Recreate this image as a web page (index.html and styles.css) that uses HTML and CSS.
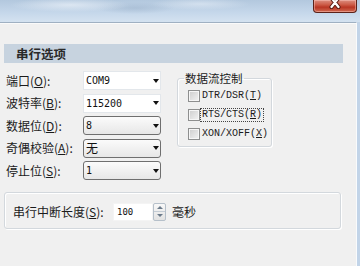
FILE: index.html
```html
<!DOCTYPE html>
<html lang="zh-CN">

<head>
  <meta charset="UTF-8">
  <meta name="viewport" content="width=device-width, initial-scale=1.0">
  <title>串行选项</title>
  <link rel="stylesheet" href="styles.css">
</head>

<body>

  <div class="window">
    <div class="titlebar">
      <div class="close">
        <svg width="14" height="9" viewBox="0 0 14 9">
          <path d="M3.5 -2 L10.5 7 M10.5 -2 L3.5 7" stroke="#5a1c12" stroke-width="4.2" stroke-linecap="round"/>
          <path d="M3.5 -2 L10.5 7 M10.5 -2 L3.5 7" stroke="#fff" stroke-width="2.2" stroke-linecap="round"/>
        </svg>
      </div>
    </div>

    <div class="client">
      <div class="panel">
        <div class="section-head">串行选项</div>

        <div class="settings">
          <div class="fields">
            <div class="row">
              <span class="lbl">端口(<u>O</u>):</span>
              <div class="combo edit"><span>COM9</span><i class="arrow"></i></div>
            </div>
            <div class="row">
              <span class="lbl">波特率(<u>B</u>):</span>
              <div class="combo edit"><span>115200</span><i class="arrow"></i></div>
            </div>
            <div class="row">
              <span class="lbl">数据位(<u>D</u>):</span>
              <div class="combo list"><span>8</span><i class="arrow"></i></div>
            </div>
            <div class="row">
              <span class="lbl">奇偶校验(<u>A</u>):</span>
              <div class="combo list"><span class="cjk">无</span><i class="arrow"></i></div>
            </div>
            <div class="row">
              <span class="lbl">停止位(<u>S</u>):</span>
              <div class="combo list"><span>1</span><i class="arrow"></i></div>
            </div>
          </div>

          <fieldset class="flow">
            <legend>数据流控制</legend>
            <div class="check"><span class="box"></span><span class="ctext">DTR/DSR(<u>T</u>)</span></div>
            <div class="check"><span class="box"></span><span class="ctext focus">RTS/CTS(<u>R</u>)</span></div>
            <div class="check"><span class="box"></span><span class="ctext">XON/XOFF(<u>X</u>)</span></div>
          </fieldset>
        </div>

        <div class="break-box">
          <span class="lbl">串行中断长度(<u>S</u>):</span>
          <div class="spin">
            <span class="spin-field">100</span>
            <span class="spin-btns">
              <span class="spin-up"></span>
              <span class="spin-down"></span>
            </span>
          </div>
          <span class="unit">毫秒</span>
        </div>
      </div>
      <div class="frame-edge"></div>
    </div>
  </div>

</body>

</html>
```

FILE: styles.css
```css
* {
  box-sizing: border-box;
}

body {
  margin: 0;
  width: 360px;
  height: 266px;
  overflow: hidden;
  font-family: "Noto Sans CJK SC", sans-serif;
  font-size: 12px;
  color: #1b1b1b;
  background: #c3d5e8;
}

.window {
  display: flex;
  flex-direction: column;
  height: 266px;
}

/* Aero title bar (blurred) */
.titlebar {
  flex: none;
  height: 22px;
  display: flex;
  justify-content: flex-end;
  align-items: flex-start;
  padding-right: 3px;
  background:
    radial-gradient(ellipse 60px 7px at 70px 5px, rgba(228, 236, 245, 0.8), transparent),
    radial-gradient(ellipse 50px 6px at 200px 4px, rgba(222, 232, 243, 0.7), transparent),
    radial-gradient(ellipse 40px 6px at 135px 8px, rgba(160, 182, 206, 0.6), transparent),
    linear-gradient(#b3c8de, #c6d8eb 60%, #d4e2f0);
}

.close {
  width: 44px;
  height: 13px;
  display: flex;
  justify-content: center;
  align-items: flex-start;
  border: 1px solid #5c2219;
  border-top: none;
  border-radius: 0 0 4px 4px;
  background: linear-gradient(#dc8e80 0%, #cc5a46 40%, #b93624 60%, #cf6a52 100%);
  box-shadow: inset 0 0 0 1px rgba(255, 205, 195, 0.45);
}

.client {
  flex: 1;
  display: flex;
}

.panel {
  width: 357px;
  padding-top: 21px;
  background: #f0f0f0;
  border-top: 1px solid #9fb0c2;
  border-right: 1px solid #f9fbfd;
  box-shadow: inset 0 1px 0 #fafafa;
}

.frame-edge {
  flex: 1;
  background: #c2d4e8;
}

.section-head {
  margin-left: 4px;
  width: 339px;
  height: 19px;
  padding-left: 12px;
  background: #c7d3df;
  font-size: 12.5px;
  font-weight: bold;
  line-height: 19px;
  color: #2a2a2a;
}

.settings {
  display: flex;
  align-items: flex-start;
  margin-top: 6.25px;
}

.fields {
  display: flex;
  flex-direction: column;
  padding-left: 6px;
}

.row {
  height: 22.5px;
  display: flex;
  align-items: center;
}

.lbl {
  width: 77px;
  line-height: 14px;
  white-space: nowrap;
}

.combo {
  width: 78px;
  height: 19px;
  display: flex;
  align-items: center;
  padding: 0 1px 0 2px;
  font-family: "DejaVu Sans Mono", monospace;
  font-size: 10px;
  color: #111;
}

.combo.edit {
  background: #fff;
  border: 1px solid #e3e7eb;
}

.combo.list {
  border: 1px solid #6f6f6f;
  border-radius: 3px;
  background: linear-gradient(#fbfbfb, #e7e7e7);
}

.combo .cjk {
  font-family: "Noto Sans CJK SC", sans-serif;
  font-size: 12px;
  line-height: 14px;
}

.arrow {
  margin-left: auto;
  width: 0;
  height: 0;
  border-top: 4px solid #111;
  border-left: 3.5px solid transparent;
  border-right: 3.5px solid transparent;
}

/* 数据流控制 group */
.flow {
  margin: 1.75px 0 0 16px;
  width: 95px;
  min-width: 0;
  padding: 1px 0 3px 10px;
  border: 1px solid #d3d8dd;
  border-radius: 3px;
  box-shadow: inset 1px 1px 0 #fff, 1px 1px 0 #fff;
}

.flow legend {
  margin-left: -4px;
  padding: 0 1px;
  font-size: 11.5px;
  line-height: 14px;
}

.check {
  height: 19px;
  display: flex;
  align-items: center;
}

.box {
  width: 12px;
  height: 12px;
  border: 1px solid #8e8f8f;
  background: linear-gradient(135deg, #cdcdcd, #f3f3f3);
  box-shadow: inset 0 0 0 1px #f6f6f6;
}

.ctext {
  margin-left: 1px;
  padding: 0 1px;
  font-family: "Liberation Mono", monospace;
  font-size: 10px;
  line-height: 12px;
  white-space: nowrap;
}

.ctext.focus {
  outline: 1px dotted #444;
}

/* bottom group */
.break-box {
  margin: 10.25px 0 0 4px;
  width: 337px;
  height: 37px;
  display: flex;
  align-items: center;
  padding: 2px 0 0 8px;
  border: 1px solid #d3d8dd;
  border-radius: 3px;
  box-shadow: inset 1px 1px 0 #fff, 1px 1px 0 #fff;
}

.break-box .lbl {
  width: 100px;
}

.spin {
  display: flex;
  height: 18px;
}

.spin-field {
  width: 40px;
  padding-left: 3px;
  background: #fff;
  border: 1px solid #f4f4f4;
  font-family: "DejaVu Sans Mono", monospace;
  font-size: 9px;
  line-height: 16px;
  color: #111;
}

.spin-btns {
  width: 13px;
  display: flex;
  flex-direction: column;
  border: 1px solid #b6c0ca;
  border-radius: 2px;
  background: linear-gradient(#f8f8f8, #e2e2e2);
}

.spin-up,
.spin-down {
  flex: 1;
  display: flex;
  justify-content: center;
  align-items: center;
}

.spin-up {
  border-bottom: 1px solid #c4ccd4;
}

.spin-up::before,
.spin-down::before {
  content: "";
  width: 0;
  height: 0;
  border-left: 3px solid transparent;
  border-right: 3px solid transparent;
}

.spin-up::before {
  border-bottom: 3px solid #6b7a8a;
}

.spin-down::before {
  border-top: 3px solid #6b7a8a;
}

.unit {
  margin-left: 6px;
  line-height: 14px;
}
```
